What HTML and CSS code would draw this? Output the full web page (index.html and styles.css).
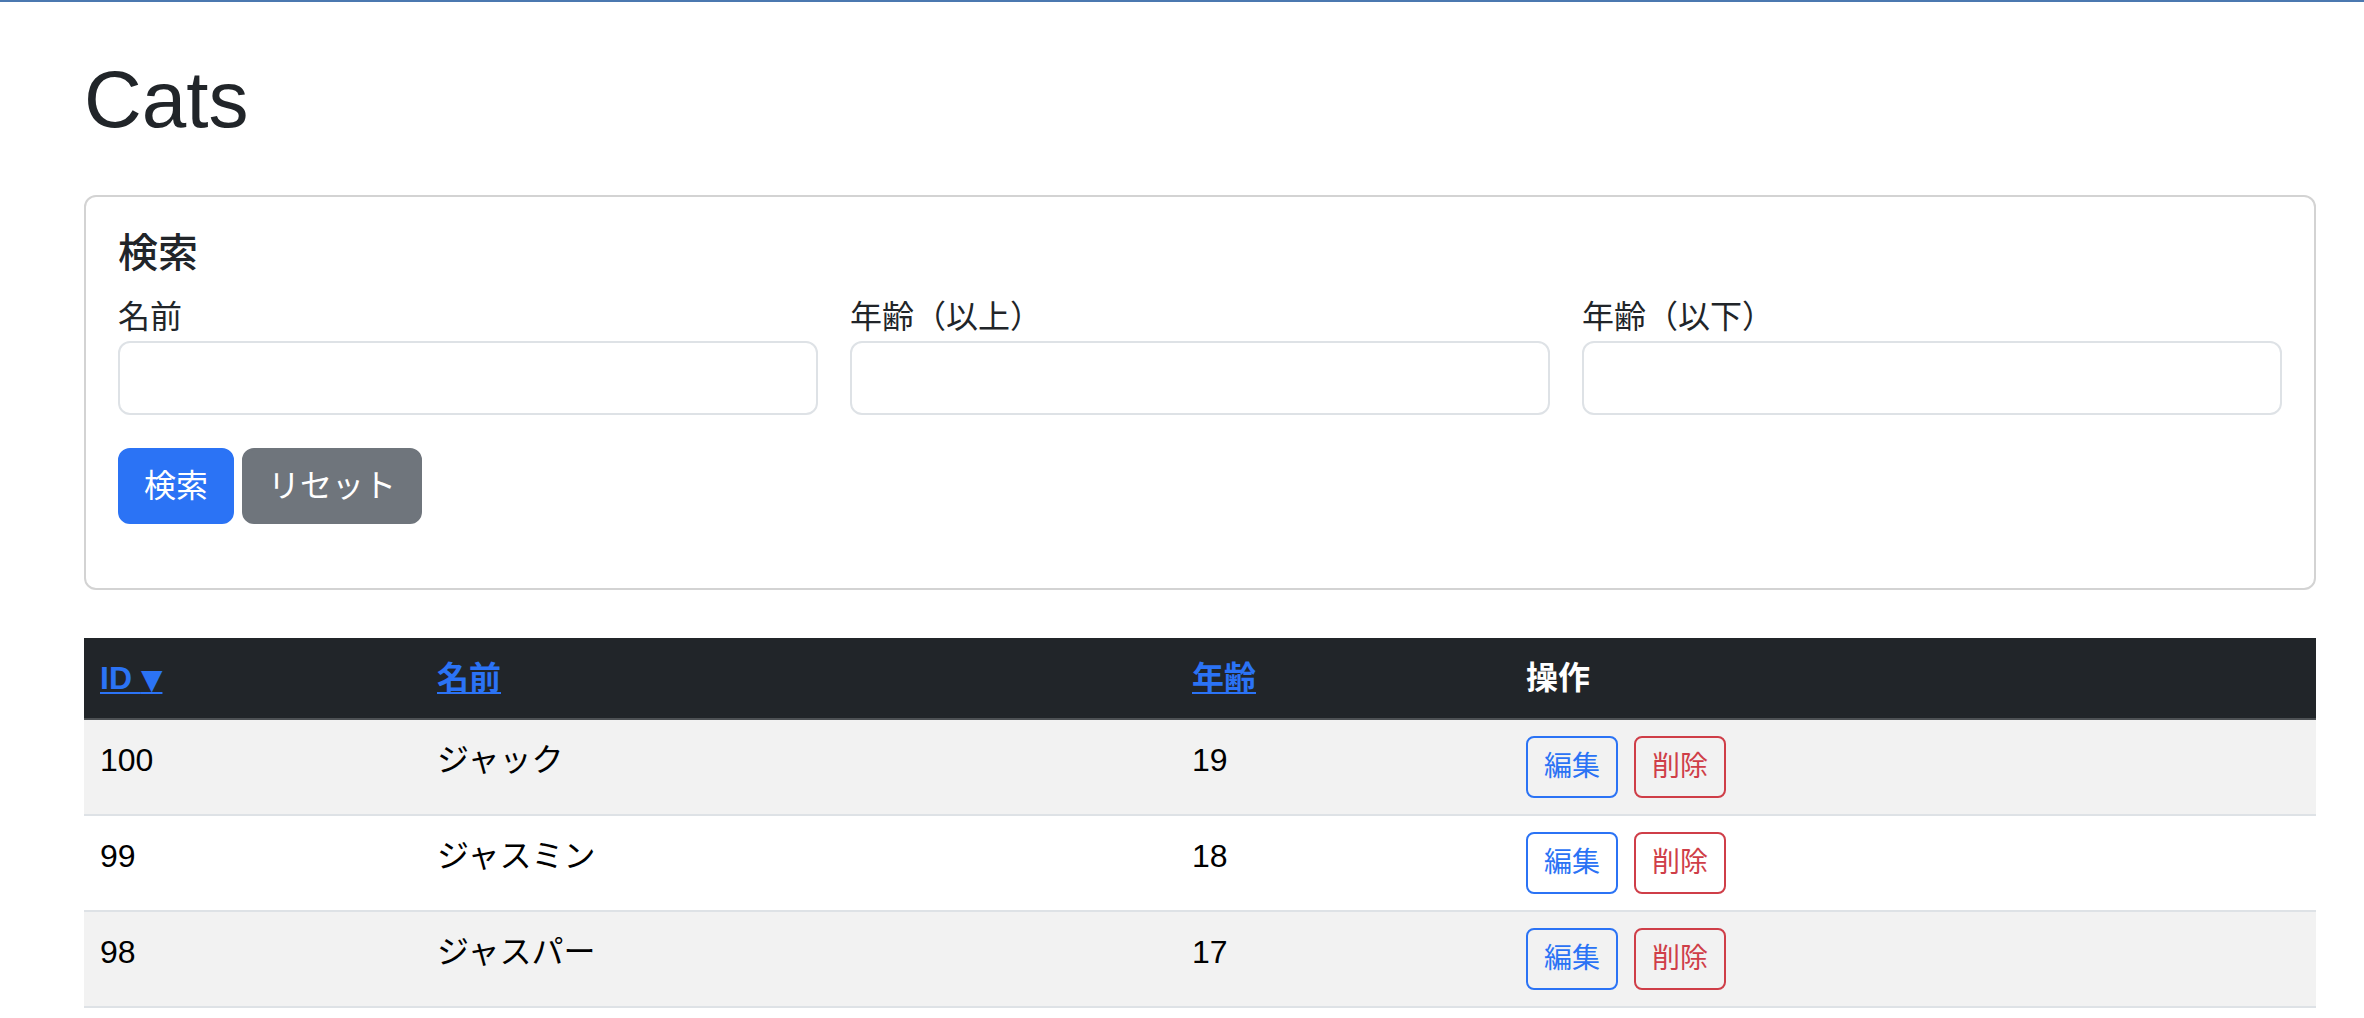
FILE: index.html
```html
<!DOCTYPE html>
<html lang="ja">
<head>
<meta charset="utf-8">
<title>Cats</title>
<link rel="stylesheet" href="styles.css">
</head>
<body>
<h1 class="page-title">Cats</h1>

<section class="card">
  <h5 class="card-title">検索</h5>
  <form class="search-form">
    <div class="fields">
      <div class="field">
        <label class="field-label" for="name">名前</label>
        <input class="field-input" id="name" type="text">
      </div>
      <div class="field">
        <label class="field-label" for="age-min">年齢（以上）</label>
        <input class="field-input" id="age-min" type="text">
      </div>
      <div class="field">
        <label class="field-label" for="age-max">年齢（以下）</label>
        <input class="field-input" id="age-max" type="text">
      </div>
    </div>
    <div class="form-actions">
      <button type="button" class="btn btn-primary">検索</button>
      <button type="button" class="btn btn-secondary">リセット</button>
    </div>
  </form>
</section>

<table class="cats-table">
  <thead>
    <tr>
      <th class="col-id"><div class="th-inner"><a href="#" class="sort-link">ID <span class="sort-arrow">▼</span></a></div></th>
      <th class="col-name"><div class="th-inner"><a href="#" class="sort-link">名前</a></div></th>
      <th class="col-age"><div class="th-inner"><a href="#" class="sort-link">年齢</a></div></th>
      <th class="col-ops"><div class="th-inner">操作</div></th>
    </tr>
  </thead>
  <tbody>
    <tr class="row-striped">
      <td>100</td>
      <td>ジャック</td>
      <td>19</td>
      <td><div class="row-actions"><a href="#" class="btn-sm btn-outline-primary">編集</a><button type="button" class="btn-sm btn-outline-danger">削除</button></div></td>
    </tr>
    <tr>
      <td>99</td>
      <td>ジャスミン</td>
      <td>18</td>
      <td><div class="row-actions"><a href="#" class="btn-sm btn-outline-primary">編集</a><button type="button" class="btn-sm btn-outline-danger">削除</button></div></td>
    </tr>
    <tr class="row-striped">
      <td>98</td>
      <td>ジャスパー</td>
      <td>17</td>
      <td><div class="row-actions"><a href="#" class="btn-sm btn-outline-primary">編集</a><button type="button" class="btn-sm btn-outline-danger">削除</button></div></td>
    </tr>
  </tbody>
</table>
</body>
</html>
```

FILE: styles.css
```css
* {
  box-sizing: border-box;
}

html, body {
  background: #ffffff;
}

body {
  margin: 0;
  border-top: 2px solid #4b78b0;
  padding: 50px 48px 0 84px;
  font-family: "Liberation Sans", "Noto Sans CJK JP", sans-serif;
  font-size: 32px;
  line-height: 48px;
  color: #212529;
}

.page-title {
  margin: 0 0 47px;
  font-size: 80px;
  line-height: 96px;
  font-weight: 500;
  color: #212529;
}

.card {
  border: 2px solid #d3d3d3;
  border-radius: 12px;
  padding: 32px 32px 64px;
  background: #fff;
}

.card-title {
  margin: 0 0 16px;
  font-size: 40px;
  line-height: 48px;
  font-weight: 500;
  color: #212529;
}

.search-form {
  margin: 0;
}

.fields {
  display: grid;
  grid-template-columns: repeat(3, 1fr);
  column-gap: 32px;
}

.field {
  display: flex;
  flex-direction: column;
}

.field-label {
  display: block;
  font-size: 32px;
  line-height: 48px;
  color: #212529;
}

.field-input {
  display: block;
  width: 100%;
  height: 74px;
  border: 2px solid #dee2e6;
  border-radius: 12px;
  background: #fff;
  font-family: inherit;
  font-size: 32px;
  padding: 0 24px;
}

.form-actions {
  display: flex;
  gap: 8px;
  margin-top: 33px;
}

.btn {
  height: 76px;
  padding: 12px 24px;
  border: 2px solid transparent;
  border-radius: 12px;
  font-family: inherit;
  font-size: 32px;
  line-height: 48px;
  color: #fff;
  cursor: pointer;
}

.btn-primary {
  background: #2b73f5;
  border-color: #2b73f5;
}

.btn-secondary {
  background: #6f757c;
  border-color: #6f757c;
}

.cats-table {
  width: 100%;
  margin-top: 48px;
  border-collapse: collapse;
  font-size: 32px;
  line-height: 48px;
}

.cats-table th {
  background: #212529;
  color: #fff;
  text-align: left;
  font-weight: 700;
  padding: 16px;
  border-bottom: 2px solid #4d5154;
}

.th-inner {
  height: 48px;
  overflow: visible;
  white-space: nowrap;
}

.col-id { width: 337px; }
.col-name { width: 755px; }
.col-age { width: 334px; }
.col-ops { width: 806px; }

.sort-link {
  color: #2b73f5;
  text-decoration: underline;
  text-decoration-thickness: 2px;
  text-underline-offset: 3px;
}

.sort-arrow {
  font-family: "DejaVu Sans", sans-serif;
  font-size: 28px;
  line-height: 1;
}

.cats-table td {
  padding: 16px;
  vertical-align: top;
  color: #000;
  border-bottom: 2px solid #dee2e6;
}

.row-striped td {
  background: #f2f2f2;
}

.row-actions {
  display: flex;
  gap: 16px;
}

.btn-sm {
  display: inline-block;
  height: 62px;
  padding: 8px 16px;
  border: 2px solid;
  border-radius: 8px;
  background: transparent;
  font-family: inherit;
  font-size: 28px;
  line-height: 42px;
  text-decoration: none;
  cursor: pointer;
}

.btn-outline-primary {
  color: #2b73f5;
  border-color: #2b73f5;
}

.btn-outline-danger {
  color: #cf3e48;
  border-color: #cf3e48;
}
```
